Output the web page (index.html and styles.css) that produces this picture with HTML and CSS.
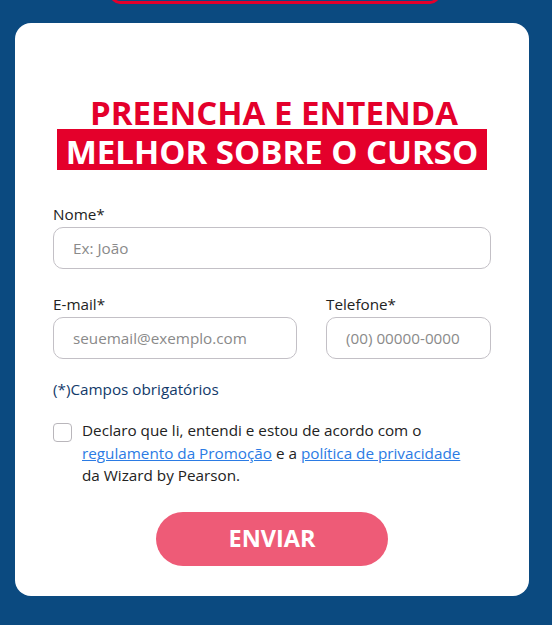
FILE: index.html
```html
<!DOCTYPE html>
<html lang="pt-BR">
<head>
<meta charset="utf-8">
<title>Formulário</title>
<link rel="stylesheet" href="styles.css">
</head>
<body>
<div class="prev-wrap"><div class="prev-btn"></div></div>
<main class="card">
  <h1 class="title">
    <span class="title-line1">PREENCHA E ENTENDA</span>
    <span class="title-line2"><span class="title-hl">MELHOR SOBRE O CURSO</span></span>
  </h1>
  <form class="form">
    <div class="field">
      <label class="label" for="nome">Nome*</label>
      <input class="input" id="nome" type="text" placeholder="Ex: João">
    </div>
    <div class="row">
      <div class="field field-email">
        <label class="label" for="email">E-mail*</label>
        <input class="input" id="email" type="text" placeholder="seuemail@exemplo.com">
      </div>
      <div class="field field-phone">
        <label class="label" for="tel">Telefone*</label>
        <input class="input" id="tel" type="text" placeholder="(00) 00000-0000">
      </div>
    </div>
    <p class="required">(*)Campos obrigatórios</p>
    <div class="consent">
      <span class="checkbox"></span>
      <p class="consent-text">Declaro que li, entendi e estou de acordo com o <a href="#" class="link">regulamento da Promoção</a> e a <a href="#" class="link">política de privacidade</a> da Wizard by Pearson.</p>
    </div>
    <div class="actions">
      <button type="button" class="submit">ENVIAR</button>
    </div>
  </form>
</main>
</body>
</html>
```

FILE: styles.css
```css
html, body {
  margin: 0;
  padding: 0;
}
body {
  background: #0b4a80;
  font-family: "Open Sans", "Liberation Sans", sans-serif;
  min-height: 625px;
  overflow: hidden;
}
.prev-wrap {
  height: 4px;
  display: flex;
  justify-content: center;
  align-items: flex-end;
  overflow: hidden;
}
.prev-btn {
  flex-shrink: 0;
  width: 330px;
  height: 40px;
  margin-left: -2px;
  border: 3px solid #e4002b;
  border-radius: 10px;
  box-sizing: border-box;
}
.card {
  margin: 19px 23px 0 15px;
  width: 514px;
  box-sizing: border-box;
  background: #fff;
  border-radius: 16px;
  padding: 74px 38px 30px 38px;
}
.title {
  margin: 0;
  display: flex;
  flex-direction: column;
  align-items: center;
  font-size: 33px;
  font-weight: 700;
}
.title-line1 {
  color: #e4002b;
  line-height: 32px;
  padding-left: 4px;
}
.title-line2 {
  display: flex;
  justify-content: center;
}
.title-hl {
  background: #e4002b;
  color: #fff;
  line-height: 36px;
  padding: 5px 9px 0 9px;
}
.form {
  margin-top: 34px;
  display: flex;
  flex-direction: column;
}
.field {
  display: flex;
  flex-direction: column;
  gap: 3px;
}
.label {
  font-size: 15.25px;
  line-height: 20px;
  color: #222;
}
.input {
  box-sizing: border-box;
  height: 42px;
  border: 1px solid #c3c0c6;
  border-radius: 10px;
  padding: 0 19px 1px 19px;
  font-family: "Open Sans", "Liberation Sans", sans-serif;
  font-size: 15.25px;
  color: #333;
  background: #fff;
  outline: none;
  width: 100%;
}
.input::placeholder {
  color: #8a8a8a;
}
.row {
  margin-top: 25px;
  display: flex;
  gap: 29px;
}
.field-email {
  width: 244px;
}
.field-phone {
  flex: 1;
}
.required {
  margin: 20px 0 0 0;
  font-size: 15.25px;
  line-height: 20px;
  color: #123a6a;
}
.consent {
  margin-top: 20px;
  display: flex;
  align-items: flex-start;
  gap: 10px;
}
.checkbox {
  flex-shrink: 0;
  width: 19px;
  height: 19px;
  margin-top: 4px;
  box-sizing: border-box;
  border: 1px solid #b9b6bb;
  border-radius: 4px;
  background: #fff;
}
.consent-text {
  margin: 0;
  max-width: 392px;
  font-size: 15.25px;
  line-height: 22.5px;
  color: #222;
}
.link {
  color: #2b7be4;
  text-decoration: underline;
}
.actions {
  margin-top: 25px;
  display: flex;
  justify-content: center;
}
.submit {
  width: 232px;
  height: 54px;
  border: none;
  border-radius: 27px;
  background: #ee5b77;
  color: #fff;
  font-family: "Open Sans", "Liberation Sans", sans-serif;
  font-size: 23.5px;
  font-weight: 700;
  cursor: pointer;
  padding: 0 0 1px 0;
}
```
